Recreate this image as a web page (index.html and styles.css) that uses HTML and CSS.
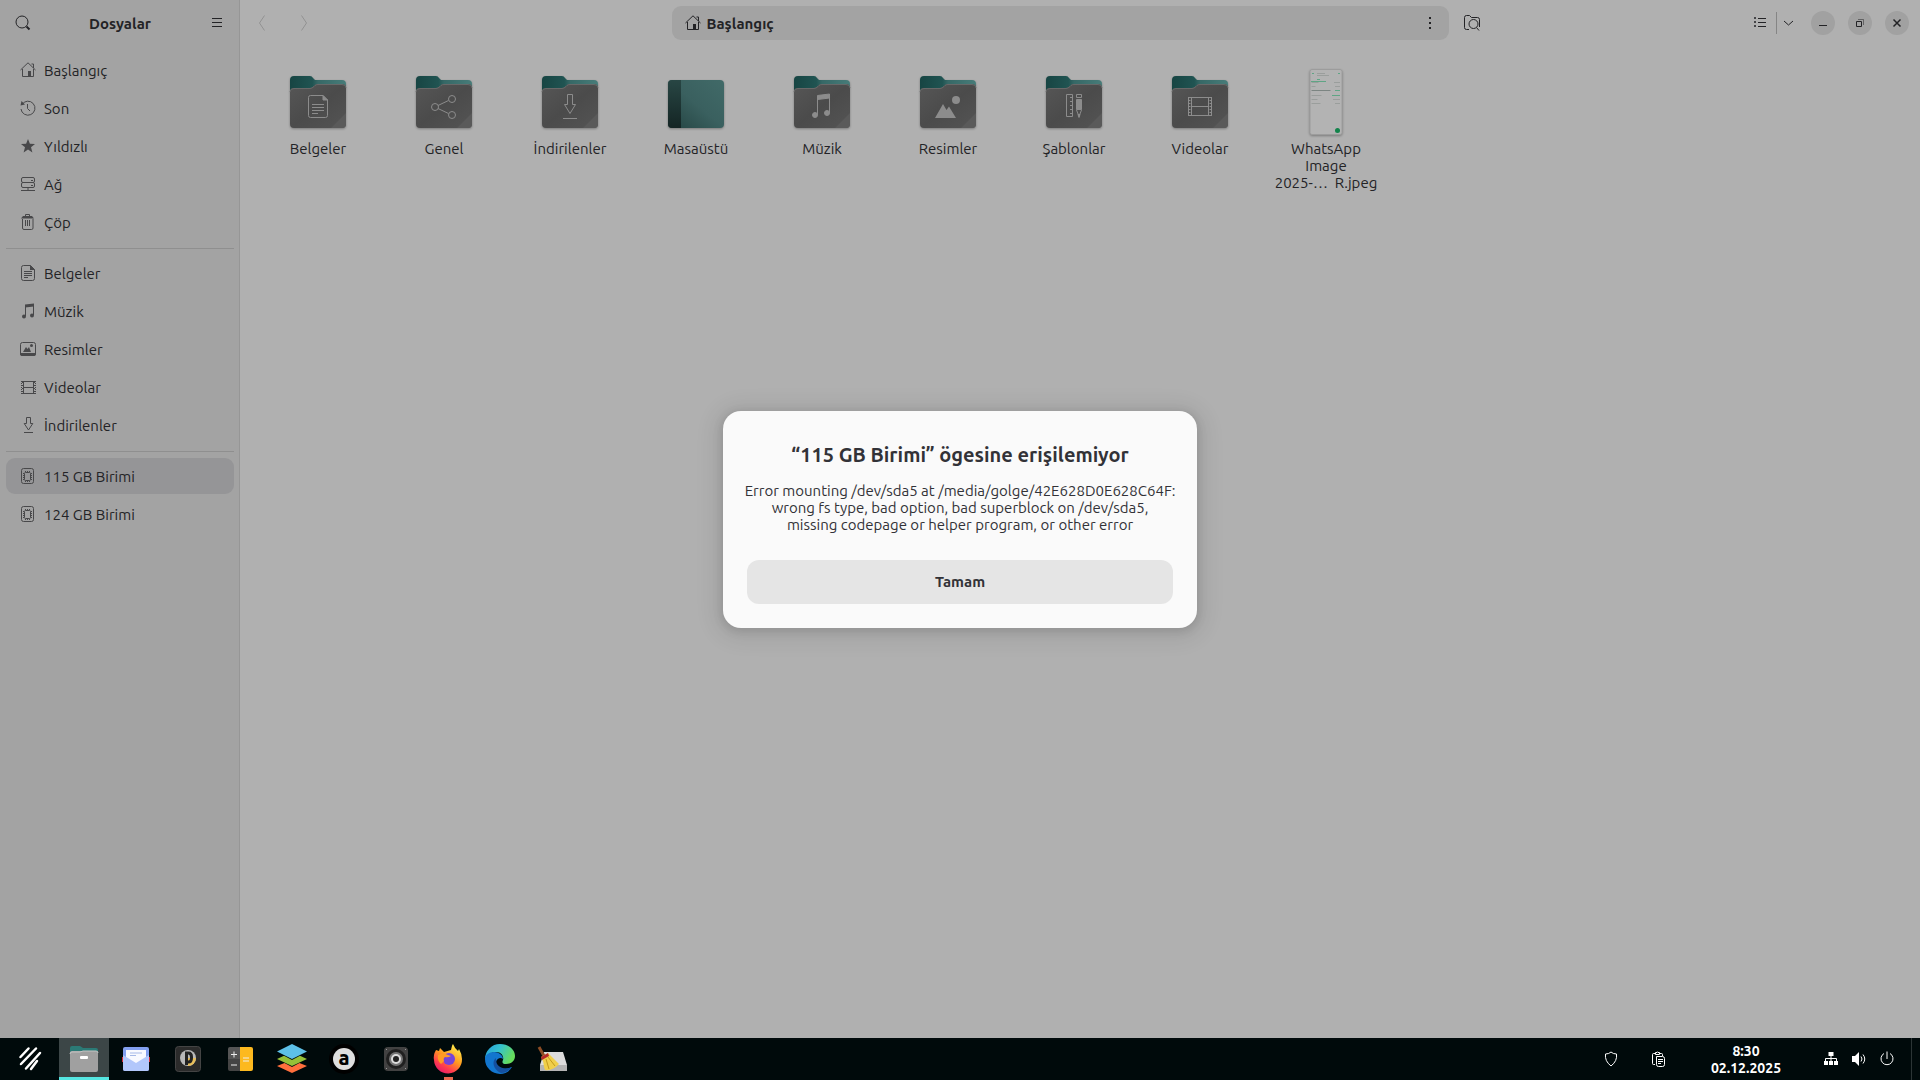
FILE: index.html
```html
<!DOCTYPE html>
<html lang="tr">
  <head>
    <meta charset="utf-8" />
    <title>Dosyalar</title>
    <link rel="stylesheet" href="styles.css">
  </head>

  <body>
    <!-- Shared shapes -->
    <svg class="defs" aria-hidden="true">
      <defs>
        <linearGradient id="tealBack" x1="0" y1="0" x2="1" y2="0">
          <stop offset="0" stop-color="#174543" />
          <stop offset="0.4" stop-color="#205452" />
          <stop offset="0.5" stop-color="#366866" />
          <stop offset="1" stop-color="#477c79" />
        </linearGradient>
        <linearGradient id="greyFront" x1="0" y1="0" x2="1" y2="1">
          <stop offset="0" stop-color="#565656" />
          <stop offset="0.5" stop-color="#4b4b4b" />
          <stop offset="1" stop-color="#545454" />
        </linearGradient>
        <linearGradient id="desk" x1="0" y1="1" x2="1" y2="0">
          <stop offset="0" stop-color="#234341" />
          <stop offset="0.5" stop-color="#3a605f" />
          <stop offset="1" stop-color="#416a68" />
        </linearGradient>
        <linearGradient id="deskEdge" x1="0" y1="0" x2="0" y2="1">
          <stop offset="0" stop-color="#284644" />
          <stop offset="1" stop-color="#142524" />
        </linearGradient>
        <symbol id="folder" viewBox="0 0 64 64">
          <path d="M4 54V10q0-4 4-4h16q2 0 3 2l2 2h27q4 0 4 4v40z" fill="url(#tealBack)" />
          <path d="M4 22q0-4 4-4h16q2 0 4-2l1-1q1-1 3-1h24q4 0 4 4v36q0 4-4 4H8q-4 0-4-4z" fill="url(#greyFront)" />
          <path d="M4 22q0-3.500 4-3.500h16q2 0 4-2l1-1q1-1 3-1h24q4 0 4 3.500" fill="none" stroke="#686868" />
          <path d="M60 43v11q0 4-4 4H45z" fill="#5a5a5a" />
        </symbol>
        <symbol id="home" viewBox="0 0 16 16">
          <path d="M.5 8L8 .8 15.500 8M11.500 2h2v4M2.500 7v7.500h11V7" fill="none" stroke="currentColor" />
          <path d="M8 9h3v6H8z" fill="currentColor" stroke="none" />
        </symbol>
        <symbol id="drive" viewBox="0 0 16 16">
          <rect x="1.500" y=".5" width="12" height="15" rx="2" fill="none" stroke="currentColor" />
          <rect x="4.500" y="4.500" width="6" height="8" rx="1" fill="none" stroke="currentColor" />
          <path d="M5 3.500h6M5 13.500h6M3.500 5v7M11.500 5v7" fill="none" stroke="currentColor" stroke-dasharray="1 1" />
        </symbol>
      </defs>
    </svg>

    <main class="window">
      <!-- Sidebar -->
      <aside class="sidebar">
        <div class="sidebar-header">
          <button type="button" class="icon-button" aria-label="Ara">
            <svg class="icon" viewBox="0 0 16 16"><circle cx="7" cy="7" r="6" /><path d="M11.500 11.500l3 3" stroke-width="2" /></svg>
          </button>
          <h1>Dosyalar</h1>
          <button type="button" class="icon-button" aria-label="Ana Menü">
            <svg class="icon" viewBox="0 0 16 16"><path d="M3 3.500h10M3 7.500h10M3 11.500h10" /></svg>
          </button>
        </div>
        <nav class="places">
          <a href="#" class="place"><svg class="icon"><use href="#home" /></svg>Başlangıç</a>
          <a href="#" class="place"><svg class="icon" viewBox="0 0 16 16"><path d="M2 4.500A7 7 0 1 1 1 9M7.500 4v4.500L10 11" /><path class="fill" d="M.5 5.500L1.500 1 5 4.500z" /></svg>Son</a>
          <a href="#" class="place"><svg class="icon" viewBox="0 0 16 16"><path class="fill" d="M8 1l1.900 4.800 5.100.3-4 3.200 1.400 5.200L8 11.600l-4.400 2.900L5 9.300 1 6.100l5.100-.3z" /></svg>Yıldızlı</a>
          <a href="#" class="place"><svg class="icon" viewBox="0 0 16 16"><rect x="1.500" y="1.500" width="13" height="5" rx="1.500" /><rect x="1.500" y="6.500" width="13" height="5" rx="1.500" /><path d="M11 4.500h2M11 9.500h2M8 12v2M1 14.500h14" /></svg>Ağ</a>
          <a href="#" class="place"><svg class="icon" viewBox="0 0 16 16"><path d="M5.500 2V.5h4V2M2.500 5v9q0 1.500 1.500 1.500h7.500q1.500 0 1.500-1.500V5M5.500 6v6M7.500 6v6M9.500 6v6" /><path class="fill" d="M3 2h9l2 2.500H1z" /></svg>Çöp</a>
          <hr>
          <a href="#" class="place"><svg class="icon" viewBox="0 0 16 16"><path d="M3.500.5h7l4 4v9q0 2-2 2h-9q-2 0-2-2v-11q0-2 2-2zM4 6.500h8M4 8.500h8M4 10.500h8M4 12.500h4" /><path class="fill" d="M10 0l5 5h-5z" /></svg>Belgeler</a>
          <a href="#" class="place"><svg class="icon" viewBox="0 0 16 16"><path d="M5.500 13V2M13.500 12V1" /><path class="fill" d="M5 1.500L14 .5v3l-9 1z" /><circle class="fill" cx="4" cy="13.500" r="2" /><circle class="fill" cx="12" cy="12.500" r="2" /></svg>Müzik</a>
          <a href="#" class="place"><svg class="icon" viewBox="0 0 16 16"><rect x=".5" y="1.500" width="15" height="13" rx="2" /><path class="fill" d="M3 11l3-5 1.500 2L9 6l2 5zM0 12h16v1q0 2-2 2H2q-2 0-2-2z" /><circle class="fill" cx="11.500" cy="4.500" r="1.500" /></svg>Resimler</a>
          <a href="#" class="place"><svg class="icon" viewBox="0 0 16 16"><path d="M1 2.500h15M1 14.500h15M3.500 2v13M13.500 2v13M4 8.500h9" /><path d="M1.500 2v13M15.500 2v13" stroke-dasharray="1 1" /><path d="M2.500 3v11M14.500 3v11" stroke-dasharray="1 2" /></svg>Videolar</a>
          <a href="#" class="place"><svg class="icon" viewBox="0 0 16 16"><path d="M6.500.5h4v6h2.300L8.500 13 4.200 6.500h2.300zM4 15.500h9" /></svg>İndirilenler</a>
          <hr>
          <a href="#" class="place selected"><svg class="icon"><use href="#drive" /></svg>115 GB Birimi</a>
          <a href="#" class="place"><svg class="icon"><use href="#drive" /></svg>124 GB Birimi</a>
        </nav>
      </aside>

      <!-- Folder view -->
      <section class="content">
        <header class="toolbar">
          <div class="toolbar-nav">
            <button type="button" class="icon-button" aria-label="Geri" disabled>
              <svg class="icon" viewBox="0 0 16 16"><path d="M9.500.5L4.500 8l5 7.500" /></svg>
            </button>
            <button type="button" class="icon-button" aria-label="İleri" disabled>
              <svg class="icon" viewBox="0 0 16 16"><path d="M5.500.5l5 7.500-5 7.500" /></svg>
            </button>
          </div>
          <div class="toolbar-path">
            <div class="pathbar">
              <button type="button" class="crumb"><svg class="icon"><use href="#home" /></svg>Başlangıç</button>
              <button type="button" class="icon-button" aria-label="Klasör Menüsü">
                <svg class="icon" viewBox="0 0 16 16"><path class="fill" d="M7 2h2v2H7zM7 7h2v2H7zM7 12h2v2H7z" /></svg>
              </button>
            </div>
            <button type="button" class="icon-button" aria-label="Klasörde Ara">
              <svg class="icon" viewBox="0 0 16 16"><path d="M5 14.500H2.500q-2 0-2-2v-10q0-2 2-2h3l2 2h6q2 0 2 2V12" /><circle cx="9.500" cy="9" r="4.500" /><path d="M12.500 12.500l2.500 3" /></svg>
            </button>
          </div>
          <div class="toolbar-end">
            <button type="button" class="view-button" aria-label="Liste Görünümü">
              <svg class="icon" viewBox="0 0 16 16"><path d="M6 3.500h8M6 7.500h8M6 11.500h8M2.500 2.500h1v1h-1zM2.500 6.500h1v1h-1zM2.500 10.500h1v1h-1z" /></svg>
            </button>
            <button type="button" class="view-menu" aria-label="Görünüm Seçenekleri">
              <svg class="icon" viewBox="0 0 16 16"><path d="M3 6l4.500 4L12 6" /></svg>
            </button>
            <div class="window-controls">
              <button type="button" aria-label="Küçült"><svg class="icon" viewBox="0 0 16 16"><path d="M4 10.500h8" /></svg></button>
              <button type="button" aria-label="Geri Yükle"><svg class="icon" viewBox="0 0 16 16"><path d="M6 4.500h5.500V10" opacity=".5" /><path d="M4.500 6.500h5v5h-5z" /></svg></button>
              <button type="button" aria-label="Kapat"><svg class="icon" viewBox="0 0 16 16"><path d="M4.500 4.500l7 7M11.500 4.500l-7 7" stroke-width="1.500" /></svg></button>
            </div>
          </div>
        </header>

        <div class="files">
          <button type="button" class="file">
            <svg class="file-icon" viewBox="0 0 64 64"><use href="#folder" /><g class="emblem"><path d="M24.500 25.500H37l4.500 4.500v15.500q0 2-2 2h-15q-2 0-2-2v-18q0-2 2-2zM26 34.500h12M26 37.500h12M26 40.500h12M26 43.500h6" /><path class="solid" d="M37 25.500l4.500 4.500H37z" /></g></svg>
            <span>Belgeler</span>
          </button>
          <button type="button" class="file">
            <svg class="file-icon" viewBox="0 0 64 64"><use href="#folder" /><g class="emblem"><circle cx="23" cy="37" r="3.500" /><circle cx="40" cy="29" r="3.500" /><circle cx="40" cy="45" r="3.500" /><path d="M26 35.500l10.500-5M26 38.500l10.500 5" /></g></svg>
            <span>Genel</span>
          </button>
          <button type="button" class="file">
            <svg class="file-icon" viewBox="0 0 64 64"><use href="#folder" /><g class="emblem"><path d="M29.500 24.500h5v10h3L32 43.500l-5.500-9h3zM25 48.500h14" /></g></svg>
            <span>İndirilenler</span>
          </button>
          <button type="button" class="file">
            <svg class="file-icon" viewBox="0 0 64 64"><rect x="4" y="10" width="56" height="48" rx="4" fill="url(#desk)" /><path d="M8 10h9v48H8q-4 0-4-4V14q0-4 4-4z" fill="url(#deskEdge)" /></svg>
            <span>Masaüstü</span>
          </button>
          <button type="button" class="file">
            <svg class="file-icon" viewBox="0 0 64 64"><use href="#folder" /><g class="emblem"><path d="M27.500 45V26M39.500 43V25" /><path class="solid" d="M27.500 25.500l12-1.500v4l-12 1.500z" /><circle class="solid" cx="25" cy="45" r="2.500" /><circle class="solid" cx="37" cy="43" r="2.500" /></g></svg>
            <span>Müzik</span>
          </button>
          <button type="button" class="file">
            <svg class="file-icon" viewBox="0 0 64 64"><use href="#folder" /><g class="emblem"><path class="solid bare" d="M19 48l8-14 3.500 6 2.500-3.500L40 48z" /><circle class="solid bare" cx="40" cy="30" r="4" /></g></svg>
            <span>Resimler</span>
          </button>
          <button type="button" class="file">
            <svg class="file-icon" viewBox="0 0 64 64"><use href="#folder" /><g class="emblem"><path d="M24.500 24.500h6v22h-6zM28 27.500h2M28 31.500h2M28 35.500h2M28 39.500h2M28 43.500h2M34.500 24.500h5v3h-5zM34.500 40l2.500 6.500 2.500-6.500" /><path class="solid" d="M34.500 29.500h5v10h-5zM36 44.500h2l-1 3z" /></g></svg>
            <span>Şablonlar</span>
          </button>
          <button type="button" class="file">
            <svg class="file-icon" viewBox="0 0 64 64"><use href="#folder" /><g class="emblem"><path d="M20 27.500h24M20 45.500h24M23.500 27v19M40.500 27v19M24 36.500h16" /><path d="M21.500 27v19M42.500 27v19" stroke-width="2" stroke-dasharray="1 2" /><path d="M20.500 27v19M43.500 27v19" /></g></svg>
            <span>Videolar</span>
          </button>
          <button type="button" class="file">
            <svg class="file-icon" viewBox="0 0 64 64">
              <rect x="16" y="-.5" width="32" height="65" rx="2" fill="#b3b3b3" stroke="#9c9c9c" />
              <path d="M23 3.500h8M23 5.500h12M17.500 12.500h7M40 12.500h6M17.500 16.500h4M41 16.500h5M17.500 25.500h10M17.500 29.500h6M39 29.500h7M17.500 33.500h9M41 33.500h5" stroke="#9a9e9c" />
              <path d="M17.500 20.500h19" stroke="#7c8582" />
              <path d="M17 11.500h15M38 25.500h8M41 20.500h5M18 3.500h2M44 3.500h2M23 9.500h3" stroke="#5fa585" />
              <circle cx="43.500" cy="60.500" r="2.500" fill="#12834b" />
            </svg>
            <span>WhatsApp<br>Image<br>2025-…&nbsp; R.jpeg</span>
          </button>
        </div>
      </section>

      <!-- Error message -->
      <div class="overlay">
        <div class="message" role="alertdialog" aria-labelledby="messageTitle" aria-describedby="messageBody">
          <h2 id="messageTitle">“115 GB Birimi” ögesine erişilemiyor</h2>
          <p id="messageBody">Error mounting /dev/sda5 at /media/golge/42E628D0E628C64F:<br>wrong fs type, bad option, bad superblock on /dev/sda5,<br>missing codepage or helper program, or other error</p>
          <button type="button" class="message-button">Tamam</button>
        </div>
      </div>
    </main>

    <!-- Taskbar -->
    <footer class="taskbar">
      <button type="button" class="start" aria-label="Uygulamalar">
        <svg width="24" height="26" viewBox="0 0 24 26"><path d="M2.500 11l8-8.500M3 18L18 2.500M8 22.500L22 7M13 23l6-8" stroke="#fff" stroke-width="2.500" stroke-linecap="round" /></svg>
      </button>
      <div class="apps">
        <button type="button" class="app active" aria-label="Dosyalar">
          <svg viewBox="0 0 32 32"><path d="M2 14V5q0-2 2-2h8l3 2h13q2 0 2 2v7z" fill="#2b7a76" /><rect x="2" y="8" width="28" height="21" rx="2" fill="#a0a0a0" /><path d="M2 11q0-2 2-2h8l3-1h13q2 0 2 2" fill="none" stroke="#c4c4c4" /><rect x="12" y="13" width="8" height="3" rx="1" fill="#fff" /></svg>
        </button>
        <button type="button" class="app" aria-label="Posta">
          <svg viewBox="0 0 32 32"><path d="M2 14h28v5H2z" fill="#d92c35" /><rect x="3" y="4" width="26" height="24" rx="2" fill="#83a0f0" /><path d="M6 7h20v13H6z" fill="#f8f9ff" /><path d="M3 12l13 8 13-8v14q0 2-2 2H5q-2 0-2-2z" fill="#b2c7fb" /><path d="M10 10h12M10 12.500h6" stroke="#a6b9e8" /></svg>
        </button>
        <button type="button" class="app" aria-label="Müzik Çalar">
          <svg viewBox="0 0 32 32"><rect x="3.500" y="3.500" width="25" height="25" rx="3" fill="#2b2b2b" stroke="#444" /><circle cx="16" cy="15" r="8" fill="#b8b8b8" /><path d="M16 23a8 8 0 0 0 8-8h-8z" fill="#e8bf5b" /><path d="M14.500 22V10h2q3 0 3 4v1q0 4-3 4h-2" fill="none" stroke="#222" stroke-width="3" /></svg>
        </button>
        <button type="button" class="app" aria-label="Hesap Makinesi">
          <svg viewBox="0 0 32 32"><path d="M6 4h10v12H4V6q0-2 2-2z" fill="#555" /><path d="M4 16h12v12H6q-2 0-2-2z" fill="#444" /><path d="M16 4h11q2 0 2 2v20q0 2-2 2H16z" fill="#fdb91f" /><path d="M7 11.500h6M10 8.500v6M7 22h6M19 15h6M19 18h6" stroke="#eee" /></svg>
        </button>
        <button type="button" class="app" aria-label="Ofis">
          <svg viewBox="0 0 32 32"><path d="M1 23l15-6 15 6-15 7z" fill="#ff6f3d" /><path d="M1 16l15-6 15 6-15 8z" fill="#000a0b" /><path d="M1 16l15-7 15 7-15 7z" fill="#95c038" /><path d="M1 9l15-7 15 7-15 8z" fill="#000a0b" /><path d="M1 8.500L16 1l15 7.500L16 16z" fill="#5dc0e8" /></svg>
        </button>
        <button type="button" class="app" aria-label="Anydesk">
          <svg viewBox="0 0 32 32"><circle cx="16" cy="16" r="15" fill="#000" /><circle cx="16" cy="16" r="11" fill="#dedede" /><text x="16" y="22" text-anchor="middle" class="app-letter">a</text></svg>
        </button>
        <button type="button" class="app" aria-label="Ses">
          <svg viewBox="0 0 32 32"><rect x="4" y="4" width="24" height="24" rx="4" fill="#424242" /><circle cx="16" cy="16" r="10" fill="#202020" /><circle cx="16" cy="16" r="7" fill="#777" /><circle cx="16" cy="16" r="5" fill="#ddd" /><circle cx="16" cy="16" r="3" fill="#222" /><path d="M6 6.500h1M25 6.500h1M6 25.500h1M25 25.500h1" stroke="#999" /></svg>
        </button>
        <button type="button" class="app running" aria-label="Firefox">
          <svg viewBox="0 0 32 32">
            <defs>
              <linearGradient id="fox" x1=".8" y1="0" x2=".2" y2="1"><stop offset="0" stop-color="#fff44f" /><stop offset=".45" stop-color="#ff9a20" /><stop offset=".75" stop-color="#ff3b4f" /><stop offset="1" stop-color="#e3156d" /></linearGradient>
            </defs>
            <path d="M4 7l3 1 1-3 4 4 7-2q1-5 2-6 2 5 5 7l1-2q3 5 3 10a14 14 0 0 1-28 1q-1-5 2-10z" fill="url(#fox)" />
            <circle cx="17" cy="16" r="6" fill="#7544d8" />
            <path d="M6 12q5-3 10 0l3 1q-3 2-6 1-2 1-1 4l-3 3q-4-3-3-9z" fill="#ff9a24" />
          </svg>
        </button>
        <button type="button" class="app" aria-label="Edge">
          <svg viewBox="0 0 32 32">
            <defs>
              <linearGradient id="edgeTop" x1="0" y1="0" x2="1" y2=".4"><stop offset="0" stop-color="#239bdc" /><stop offset=".5" stop-color="#35c2ce" /><stop offset="1" stop-color="#66dc5c" /></linearGradient>
            </defs>
            <path d="M1 16A15 15 0 0 1 16 1c9 0 15 6 15 12 0 5-4 8-9 8-4 0-4-2-3-4 1-3-1-8-7-8-5 0-9 3-11 7z" fill="url(#edgeTop)" />
            <path d="M1 16c0-4 4-7 9-7 6 0 9 4 9 7-2-2-6-1-7 3 0 6 8 9 16 5-3 5-7 7-12 7A15 15 0 0 1 1 16z" fill="#1276cf" />
            <path d="M12 15c-5 4-2 12 5 15 5 0 8-2 11-6-8 4-17 0-16-9z" fill="#14509f" />
          </svg>
        </button>
        <button type="button" class="app" aria-label="Temizleyici">
          <svg viewBox="0 0 32 32"><path d="M8 9h19l4 13H4z" fill="#dcdcdc" /><path d="M4 22h27v6H4z" fill="#b4b4b4" /><path d="M3 4l5 9" stroke="#8c4d25" stroke-width="3" /><path d="M5 14l7-4q5 5 11 11-6 7-14 6l-1-3q0-5-3-10z" fill="#f0cf4a" /><path d="M10 16l3 10M12 14l7 9" stroke="#c49a1d" /><path d="M5 14l7-4 1 3-7 4z" fill="#b3282a" /></svg>
        </button>
      </div>
      <div class="tray">
        <button type="button" class="tray-wide" aria-label="Güvenlik"><svg class="icon" viewBox="0 0 16 16"><path d="M8 1q2 2 5.500 2 1 7-5.500 12Q1.500 10 2.500 3 6 3 8 1z" /></svg></button>
        <button type="button" class="tray-wide" aria-label="Pano"><svg class="icon" viewBox="0 0 16 16"><path d="M5 13.500H3.500q-1 0-1-1v-9q0-1 1-1H5M10 2.500h1.500q1 0 1 1V5M5.500 3.500v-2H7q.5-1.500 1 0h1.500v2zM6.500 5.500h6q2 0 2 2v6q0 2-2 2h-4q-2 0-2-2zM8 8.500h5M8 10.500h5M8 12.500h3" /></svg></button>
        <time class="clock">8:30<br>02.12.2025</time>
        <button type="button" class="tray-item" aria-label="Ağ"><svg class="icon" viewBox="0 0 16 16"><path class="fill" d="M5.500 1h5v4h-5zM1 10h4v4H1zM6 10h4v4H6zM11 10h4v4h-4z" /><path d="M8 5v5M2.500 10V7.500h11V10" /></svg></button>
        <button type="button" class="tray-item" aria-label="Ses Düzeyi"><svg class="icon" viewBox="0 0 16 16"><path class="fill" d="M1 5h3l4-4v14l-4-4H1z" /><path d="M10 5.500q2 2.500 0 5M12 3.500q3.500 4.500 0 9" /></svg></button>
        <button type="button" class="tray-item" aria-label="Kapat"><svg class="icon" viewBox="0 0 16 16"><path d="M5 2.500a6 6 0 1 0 6 0M8 .5V8" /></svg></button>
        <button type="button" class="show-desktop" aria-label="Masaüstünü Göster"></button>
      </div>
    </footer>
  </body>
</html>
```
FILE: styles.css
```css
* {
  box-sizing: border-box;
}
body {
  margin: 0;
  height: 100vh;
  display: flex;
  flex-direction: column;
  font-family: Ubuntu, "Noto Sans", sans-serif;
  font-size: 15px;
  line-height: 17px;
  color: #232326;
}
button {
  display: flex;
  align-items: center;
  justify-content: center;
  margin: 0;
  padding: 0;
  border: 0;
  background: none;
  font: inherit;
  color: inherit;
}
h1, h2, p {
  margin: 0;
}
.defs {
  position: absolute;
  width: 0;
  height: 0;
}
.icon {
  width: 16px;
  height: 16px;
  flex: none;
  fill: none;
  stroke: currentColor;
}
.fill {
  fill: currentColor;
  stroke: none;
}
.icon-button {
  width: 34px;
  height: 34px;
}
.icon-button:disabled {
  color: #929292;
}

/* Window */
.window {
  position: relative;
  flex: 1;
  min-height: 0;
  display: flex;
  background: #b0b0b0;
}
.sidebar {
  width: 240px;
  flex: none;
  background: #a3a3a3;
  border-right: 1px solid #969696;
}
.sidebar-header {
  display: flex;
  align-items: center;
  justify-content: space-between;
  padding: 6px 5px 6px 6px;
}
.sidebar-header h1 {
  font-size: 15px;
}
.places {
  display: flex;
  flex-direction: column;
  gap: 2px;
  padding: 6px 5px 6px 6px;
}
.places hr {
  width: 100%;
  height: 1px;
  margin: 6px 0 4px;
  border: 0;
  background: #8f8f8f;
}
.place {
  display: flex;
  align-items: center;
  gap: 8px;
  height: 36px;
  padding: 0 14px;
  border-radius: 9px;
  color: #232326;
  text-decoration: none;
}
.place .icon {
  color: #48484a;
}
.place.selected {
  background: #959597;
}

/* Toolbar */
.content {
  flex: 1;
  min-width: 0;
}
.toolbar {
  display: grid;
  grid-template-columns: 1fr minmax(0, 817px) 1fr;
  align-items: center;
  padding: 6px;
}
.toolbar-nav {
  display: flex;
  gap: 7px;
}
.toolbar-path {
  display: flex;
  gap: 6px;
}
.pathbar {
  flex: 1;
  display: flex;
  justify-content: space-between;
  padding: 0 2px 0 13px;
  border-radius: 9px;
  background: #a3a3a3;
}
.crumb {
  gap: 6px;
  font-weight: bold;
}
.toolbar-end {
  display: flex;
  align-items: center;
  justify-content: flex-end;
}
.view-button {
  width: 32px;
  height: 22px;
}
.view-menu {
  width: 24px;
  height: 22px;
  margin-right: 11px;
  border-left: 1px solid #858585;
}
.window-controls {
  display: flex;
  gap: 13px;
  padding-right: 5px;
}
.window-controls button {
  width: 24px;
  height: 24px;
  border-radius: 50%;
  background: #a1a1a1;
}

/* Files */
.files {
  display: grid;
  grid-template-columns: repeat(auto-fill, 126px);
  padding: 24px 15px;
}
.file {
  flex-direction: column;
  justify-content: flex-start;
  gap: 6px;
  text-align: center;
}
.file-icon {
  width: 64px;
  height: 64px;
  overflow: visible;
  filter: drop-shadow(0 1px 1px rgba(0, 0, 0, 0.3));
}
.emblem {
  fill: none;
  stroke: #8c8c8c;
}
.emblem .solid {
  fill: #8c8c8c;
}
.emblem .bare {
  stroke: none;
}

/* Error message */
.overlay {
  position: absolute;
  inset: 0;
  display: flex;
  align-items: center;
  justify-content: center;
}
.message {
  display: flex;
  flex-direction: column;
  width: 474px;
  padding: 32px 24px 24px;
  border-radius: 18px;
  background: #fafafa;
  box-shadow: 0 2px 8px 2px rgba(0, 0, 0, 0.1), 0 3px 20px 10px rgba(0, 0, 0, 0.07);
  color: #323237;
  text-align: center;
}
.message h2 {
  font-size: 20px;
  line-height: 24px;
}
.message p {
  align-self: center;
  margin: 15px 0 27px;
  white-space: nowrap;
}
.message-button {
  height: 44px;
  border-radius: 12px;
  background: #e5e5e5;
  font-weight: bold;
}

/* Taskbar */
.taskbar {
  flex: none;
  display: flex;
  height: 42px;
  background: #000a0b;
  color: #fff;
}
.start {
  width: 59px;
}
.apps {
  flex: 1;
  display: flex;
  gap: 2px;
}
.app {
  width: 50px;
  border-bottom: 3px solid transparent;
  padding-top: 3px;
}
.app svg {
  width: 32px;
  height: 32px;
}
.app.active {
  background: #3c4647;
  border-bottom-color: #55e6e2;
}
.app.running {
  background: linear-gradient(#ea6a50, #ea6a50) center bottom / 9px 3px no-repeat border-box;
}
.app-letter {
  font-size: 20px;
  font-weight: 900;
}
.tray {
  display: flex;
}
.tray-wide {
  width: 47px;
}
.clock {
  width: 130px;
  margin-right: 6px;
  padding-top: 5px;
  font-size: 14px;
  font-weight: bold;
  text-align: center;
}
.tray-item {
  width: 28px;
}
.show-desktop {
  width: 9px;
  margin-left: 10px;
  border-left: 1px solid #2b3435;
}
```
